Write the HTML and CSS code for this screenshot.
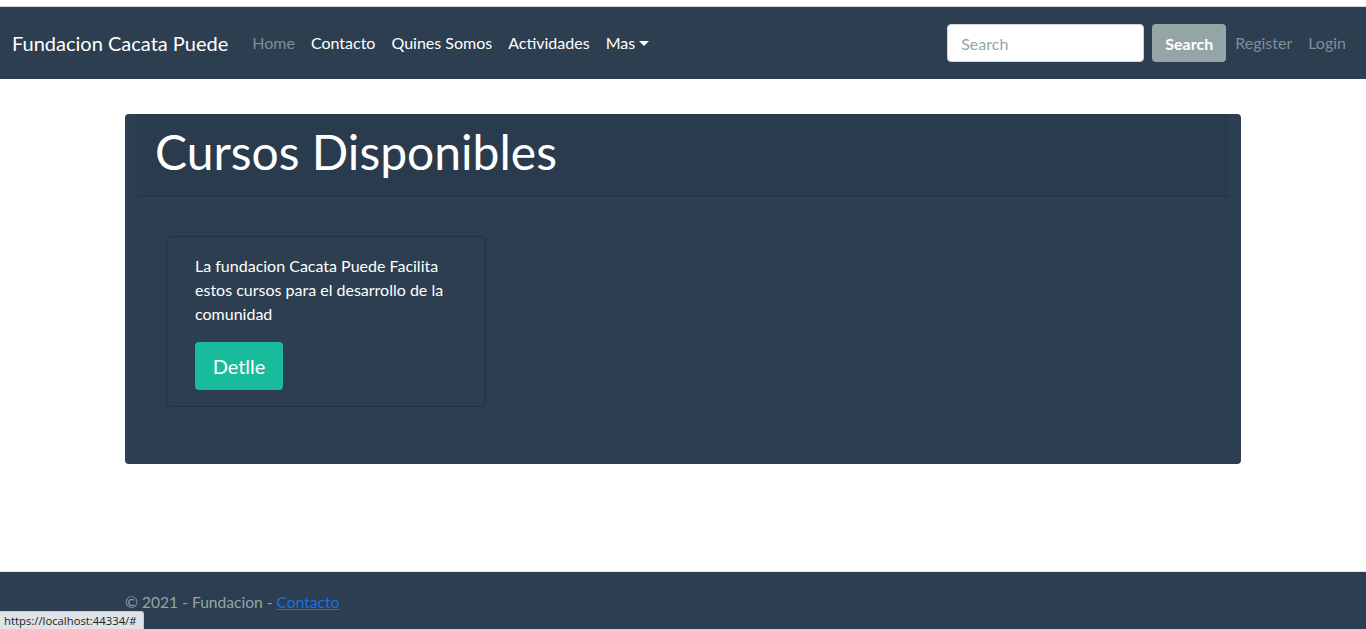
FILE: index.html
```html
<!DOCTYPE html>
<html lang="es">
<head>
<meta charset="utf-8">
<title>Fundacion Cacata Puede</title>
<link rel="stylesheet" href="styles.css">
</head>
<body>
<div class="page">
  <header class="navbar">
    <a class="brand" href="#">Fundacion Cacata Puede</a>
    <nav class="nav">
      <a class="nav-link muted" href="#">Home</a>
      <a class="nav-link" href="#">Contacto</a>
      <a class="nav-link" href="#">Quines Somos</a>
      <a class="nav-link" href="#">Actividades</a>
      <a class="nav-link dropdown" href="#">Mas</a>
    </nav>
    <form class="search">
      <input class="search-input" type="text" placeholder="Search">
      <button class="search-btn" type="button">Search</button>
    </form>
    <nav class="nav">
      <a class="nav-link muted" href="#">Register</a>
      <a class="nav-link muted" href="#">Login</a>
    </nav>
  </header>

  <main class="container">
    <section class="panel">
      <div class="panel-header">
        <h1 class="title">Cursos Disponibles</h1>
      </div>
      <div class="panel-body">
        <div class="course">
          <p class="course-text">La fundacion Cacata Puede Facilita estos cursos para el desarrollo de la comunidad</p>
          <a class="btn-detail" href="#">Detlle</a>
        </div>
      </div>
    </section>
  </main>

  <footer class="footer">
    <div class="footer-inner">&copy; 2021 - Fundacion - <a class="footer-link" href="#">Contacto</a></div>
  </footer>
</div>
<div class="status">https://localhost:44334/#</div>
</body>
</html>
```

FILE: styles.css
```css
* { box-sizing: border-box; }
html, body { margin: 0; padding: 0; }
body {
  font-family: Lato, "Open Sans", "Liberation Sans", sans-serif;
  font-size: 16px;
  line-height: 1.5;
  color: #fff;
  background: #fff;
}
.page {
  min-height: 629px;
  display: flex;
  flex-direction: column;
  padding-top: 6px;
}
.navbar {
  height: 73px;
  background: #2c3e50;
  border-top: 1px solid #cfd4d9;
  display: flex;
  align-items: center;
  padding: 0 12px;
}
.brand {
  color: #fff;
  text-decoration: none;
  font-size: 20px;
  margin-right: 16px;
  white-space: nowrap;
}
.nav { display: flex; align-items: center; }
.nav-link {
  color: #fff;
  text-decoration: none;
  padding: 8px;
  white-space: nowrap;
}
.nav-link.muted { color: #808d96; }
.dropdown::after {
  content: "";
  display: inline-block;
  margin-left: 4px;
  vertical-align: 3px;
  border-top: 5px solid #fff;
  border-left: 5px solid transparent;
  border-right: 5px solid transparent;
}
.search {
  margin-left: auto;
  display: flex;
  align-items: center;
  gap: 8px;
  margin-right: 1px;
}
.search-input {
  width: 197px;
  height: 38px;
  border: 1px solid #ced4da;
  border-radius: 4px;
  padding: 0 13px;
  font-family: inherit;
  font-size: 16px;
  color: #495057;
  background: #fff;
}
.search-input::placeholder { color: #95a5a6; }
.search-btn {
  width: 74px;
  height: 38px;
  border: 0;
  border-radius: 4px;
  background: #95a5a6;
  color: #fff;
  font-family: inherit;
  font-size: 16px;
  font-weight: 700;
  padding: 0;
}
.container {
  width: 1116px;
  margin: 35px auto 0;
}
.panel {
  background: #2c3e50;
  border-radius: 4px;
  height: 350px;
}
.panel-header {
  margin: 0 12px;
  padding: 9px 18px 15px;
  background: #2a3b4d;
  border-bottom: 1px solid #25323f;
}
.title {
  margin: 0;
  font-size: 48px;
  font-weight: 400;
  line-height: 1.2;
}
.panel-body {
  padding: 39px 41px;
}
.course {
  width: 320px;
  border: 1px solid #25333f;
  border-radius: 4px;
  padding: 17px 28px 16px;
}
.course-text {
  margin: 0 0 16px;
  line-height: 24px;
}
.btn-detail {
  display: inline-flex;
  align-items: center;
  justify-content: center;
  width: 88px;
  height: 48px;
  background: #18bc9c;
  color: #fff;
  text-decoration: none;
  border-radius: 4px;
  font-size: 20px;
}
.footer {
  margin-top: auto;
  height: 58px;
  background: #2c3e50;
  border-top: 1px solid #dee2e6;
  overflow: hidden;
}
.footer-inner {
  width: 1116px;
  margin: 0 auto;
  line-height: 60px;
  font-size: 15.6px;
  color: #95a5a6;
  white-space: nowrap;
}
.footer-link { color: #1a6fe0; }
.status {
  position: fixed;
  left: 0;
  bottom: 0;
  height: 18px;
  padding: 0 6px 0 4px;
  background: #dfe2e7;
  border: 1px solid #c7cbd1;
  border-left: 0;
  border-bottom: 0;
  border-top-right-radius: 3px;
  color: #222;
  font-family: "Open Sans", "Noto Sans", "Liberation Sans", sans-serif;
  font-size: 11.3px;
  line-height: 17px;
}
```
